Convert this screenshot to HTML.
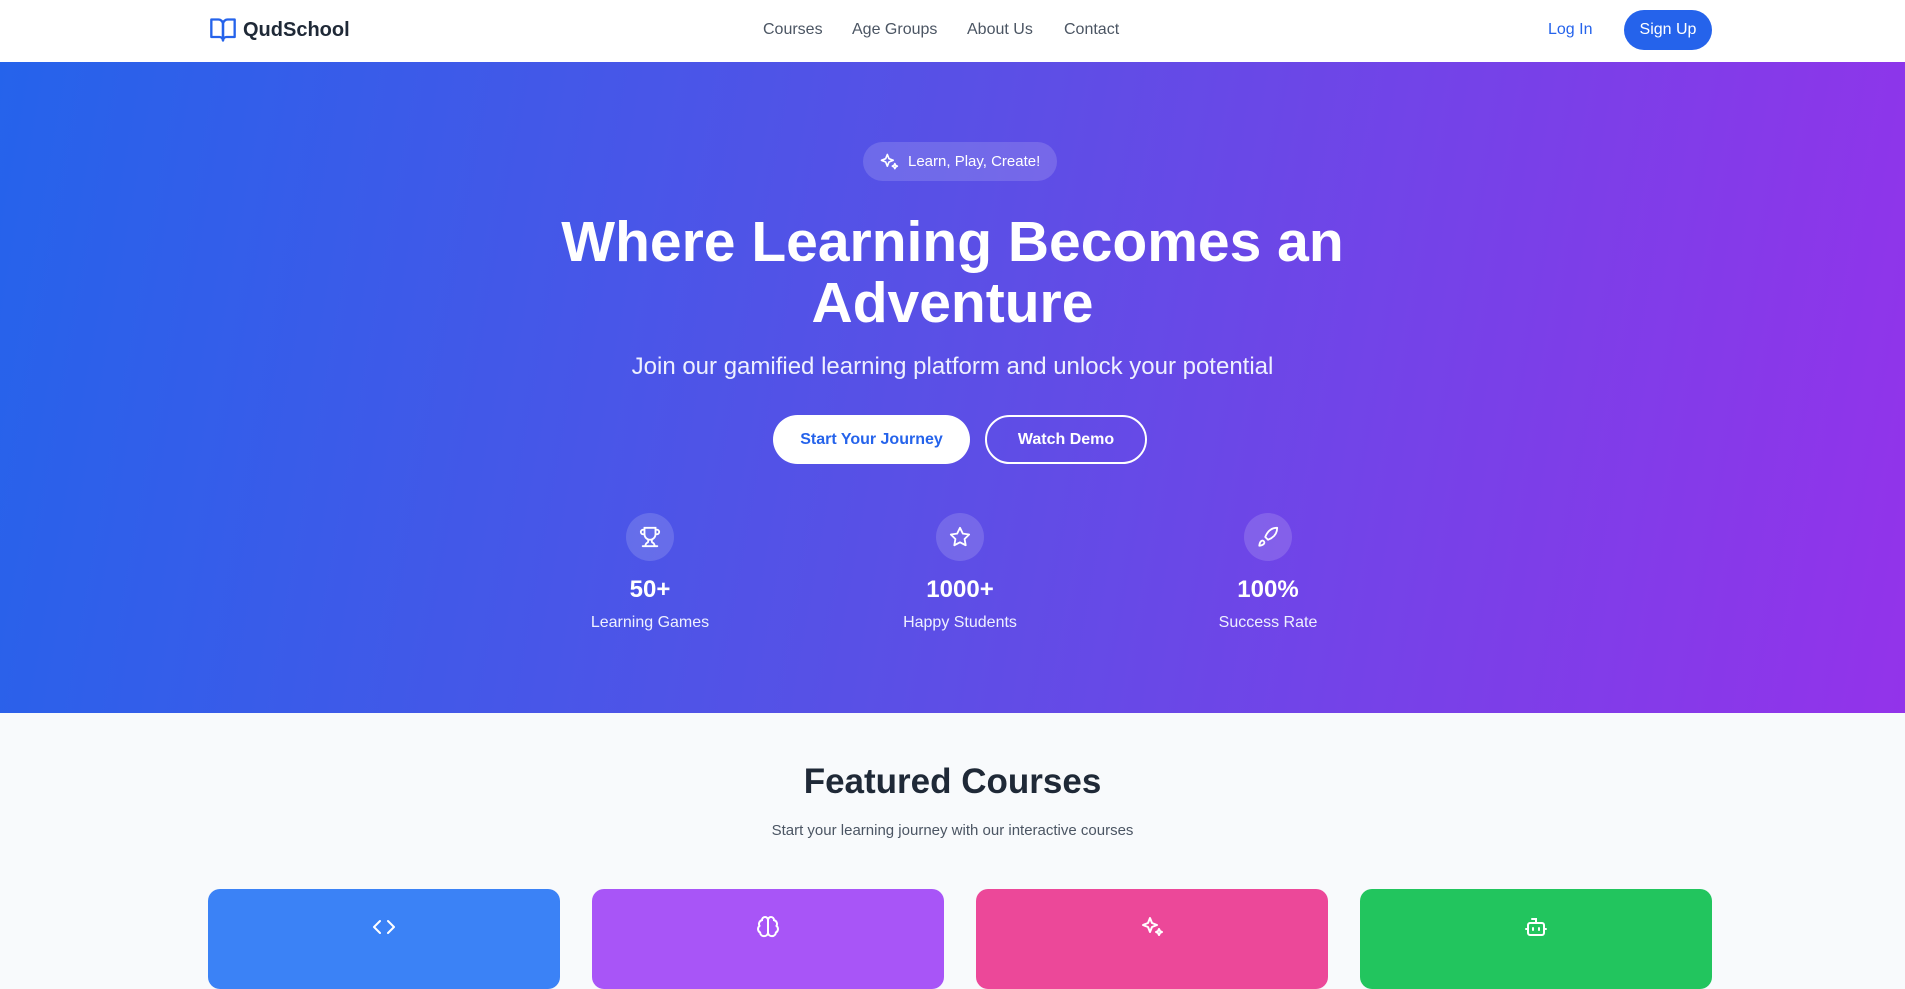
<!DOCTYPE html>
<html><head><meta charset="utf-8"><style>
*{margin:0;padding:0;box-sizing:border-box}
body{width:1905px;height:960px;overflow:hidden;font-family:"Liberation Sans",sans-serif;background:#f8fafc;position:relative}
.nav{position:absolute;top:0;left:0;width:1905px;height:62px;background:#fff}
.a{position:absolute}
.nav .l{font-size:16px;color:#4b5563;top:21px}
.hero{position:absolute;top:62px;left:0;width:1905px;height:651px;background:linear-gradient(100deg,#2563eb 0%,#5b4fe6 50%,#9333ea 100%)}
.c{text-align:center;color:#fff}
.circ{width:48px;height:48px;border-radius:50%;background:rgba(255,255,255,.15);display:flex;align-items:center;justify-content:center}
.card{position:absolute;top:889px;width:352px;height:100px;border-radius:12px;display:flex;justify-content:center;padding-top:26px}
</style></head><body>
<div class="nav">
<svg class="a" style="left:208px;top:16px" width="30" height="28" viewBox="0 0 24 24" fill="none" stroke="#2563eb" stroke-width="2" stroke-linecap="round" stroke-linejoin="round"><path d="M2 3h6a4 4 0 0 1 4 4v14a3 3 0 0 0-3-3H2z"/><path d="M22 3h-6a4 4 0 0 0-4 4v14a3 3 0 0 1 3-3h7z"/></svg>
<div class="a" style="left:243px;top:19px;font-size:20px;font-weight:bold;color:#1f2937">QudSchool</div>
<div class="a l" style="left:763px">Courses</div>
<div class="a l" style="left:852px">Age Groups</div>
<div class="a l" style="left:967px">About Us</div>
<div class="a l" style="left:1064px">Contact</div>
<div class="a" style="left:1548px;top:21px;font-size:16px;color:#2563eb">Log In</div>
<div class="a" style="left:1624px;top:10px;width:88px;height:40px;border-radius:20px;background:#2563eb;color:#fff;font-size:16px;text-align:center;line-height:40px">Sign Up</div>
</div>
<div class="hero">
<div class="a" style="left:863px;top:80px;width:194px;height:39px;border-radius:20px;background:rgba(255,255,255,.15);color:#fff;font-size:15px;line-height:39px;padding-left:45px">Learn, Play, Create!</div>
<svg class="a" style="left:879px;top:90px" width="20" height="20" viewBox="0 0 24 24" fill="none" stroke="#fff" stroke-width="2" stroke-linejoin="round"><path d="M10 3l2 5 5 2-5 2-2 5-2-5-5-2 5-2z"/><path d="M19 14l1 2 2 1-2 1-1 2-1-2-2-1 2-1z"/></svg>
<div class="a c" style="left:0;width:1905px;top:150px;font-size:57px;font-weight:bold;line-height:61px">Where Learning Becomes an<br>Adventure</div>
<div class="a c" style="left:0;width:1905px;top:291px;font-size:24px;color:#eef0ff">Join our gamified learning platform and unlock your potential</div>
<div class="a" style="left:773px;top:353px;width:197px;height:49px;border-radius:25px;background:#fff;color:#2563eb;font-size:16px;font-weight:bold;text-align:center;line-height:49px">Start Your Journey</div>
<div class="a" style="left:985px;top:353px;width:162px;height:49px;border-radius:25px;border:2px solid #fff;color:#fff;font-size:16px;font-weight:bold;text-align:center;line-height:45px">Watch Demo</div>
<div class="a c" style="left:550px;width:200px;top:451px"><div class="circ" style="margin:0 auto"><svg width="22" height="22" viewBox="0 0 24 24" fill="none" stroke="#fff" stroke-width="2" stroke-linecap="round"><path d="M6 9H4.5a2.5 2.5 0 0 1 0-5H6M18 9h1.5a2.5 2.5 0 0 0 0-5H18M4 22h16M10 14.7V17c0 .6-.5 1-1 1.2C7.9 18.8 7 20.2 7 22M14 14.7V17c0 .6.5 1 1 1.2 1.1.6 2 2 2 3.8M18 2H6v7a6 6 0 0 0 12 0z"/></svg></div>
<div style="font-size:24px;font-weight:bold;margin-top:15px">50+</div><div style="font-size:16px;margin-top:10px;color:#eef0ff">Learning Games</div></div>
<div class="a c" style="left:860px;width:200px;top:451px"><div class="circ" style="margin:0 auto"><svg width="22" height="22" viewBox="0 0 24 24" fill="none" stroke="#fff" stroke-width="2" stroke-linejoin="round"><path d="M12 2l3.1 6.3 6.9 1-5 4.9 1.2 6.8L12 17.8 5.8 21l1.2-6.8-5-4.9 6.9-1z"/></svg></div>
<div style="font-size:24px;font-weight:bold;margin-top:15px">1000+</div><div style="font-size:16px;margin-top:10px;color:#eef0ff">Happy Students</div></div>
<div class="a c" style="left:1168px;width:200px;top:451px"><div class="circ" style="margin:0 auto"><svg width="22" height="22" viewBox="0 0 24 24" fill="none" stroke="#fff" stroke-width="2" stroke-linecap="round" stroke-linejoin="round"><path d="M4.5 16.5c-1.5 1.3-2 5-2 5s3.7-.5 5-2c.7-.8.7-2.1-.1-2.9a2.2 2.2 0 0 0-2.9-.1zM12 15l-3-3a22 22 0 0 1 2-3.9A12.9 12.9 0 0 1 22 2c0 2.7-.8 7.5-6 11a22 22 0 0 1-4 2z"/></svg></div>
<div style="font-size:24px;font-weight:bold;margin-top:15px">100%</div><div style="font-size:16px;margin-top:10px;color:#eef0ff">Success Rate</div></div>
</div>
<div class="a" style="left:0;width:1905px;top:762px;text-align:center;font-size:35px;font-weight:bold;color:#1f2937">Featured Courses</div>
<div class="a" style="left:0;width:1905px;top:822px;text-align:center;font-size:15px;color:#4b5563">Start your learning journey with our interactive courses</div>
<div class="card" style="left:208px;background:#3b82f6"><svg width="24" height="24" viewBox="0 0 24 24" fill="none" stroke="#fff" stroke-width="2" stroke-linecap="round" stroke-linejoin="round"><path d="M16 18l6-6-6-6M8 6l-6 6 6 6"/></svg></div>
<div class="card" style="left:592px;background:#a855f7"><svg width="24" height="24" viewBox="0 0 24 24" fill="none" stroke="#fff" stroke-width="2" stroke-linecap="round"><path d="M12 5a3 3 0 1 0-6 .1 4 4 0 0 0-2.5 5.8 4 4 0 0 0 .6 6.6A4 4 0 0 0 12 18zM12 5a3 3 0 1 1 6 .1 4 4 0 0 1 2.5 5.8 4 4 0 0 1-.6 6.6A4 4 0 0 1 12 18zM12 5v13"/></svg></div>
<div class="card" style="left:976px;background:#ec4899"><svg width="24" height="24" viewBox="0 0 24 24" fill="none" stroke="#fff" stroke-width="2" stroke-linejoin="round"><path d="M10 3l2 5 5 2-5 2-2 5-2-5-5-2 5-2z"/><path d="M19 14l1 2 2 1-2 1-1 2-1-2-2-1 2-1z"/></svg></div>
<div class="card" style="left:1360px;background:#22c55e"><svg width="24" height="24" viewBox="0 0 24 24" fill="none" stroke="#fff" stroke-width="2" stroke-linecap="round"><rect x="4" y="8" width="16" height="12" rx="2"/><path d="M12 8V4H8M2 14h2M20 14h2M9 13v2M15 13v2"/></svg></div>
</body></html>
